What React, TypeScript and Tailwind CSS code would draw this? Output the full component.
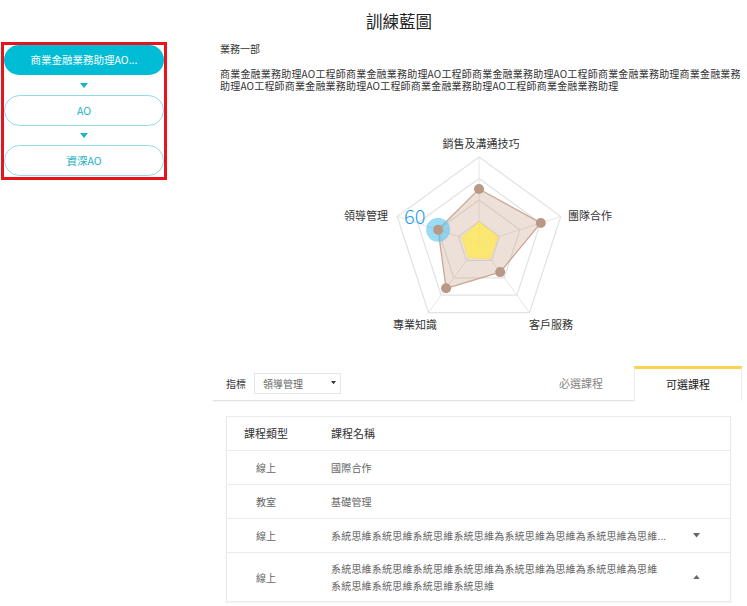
import React, { useState } from "react";

const LABELS = ["銷售及溝通技巧", "團隊合作", "客戶服務", "專業知識", "領導管理"];
const CX = 266;
const CY = 114;
const R = 86;

const point = (i: number, r: number) => {
  const a = (Math.PI * 2 * i) / 5;
  return [CX + r * Math.sin(a), CY - r * Math.cos(a)];
};

const poly = (rs: number[]) =>
  rs.map((r, i) => point(i, r).map((n) => n.toFixed(1)).join(",")).join(" ");

// radar chart for the selected job
const Radar = () => {
  const score = [54, 65, 36, 56, 43];
  const base = [21, 20, 19, 18, 18];
  const [hx, hy] = point(4, 43);

  return (
    <svg width="529" height="225" className="block">
      {[0.25, 0.5, 0.75, 1].map((k) => (
        <polygon
          key={k}
          points={poly([R * k, R * k, R * k, R * k, R * k])}
          fill="none"
          stroke="#e2e2e2"
          strokeWidth="1.2"
        />
      ))}
      {[0, 1, 2, 3, 4].map((i) => {
        const [x, y] = point(i, R);
        return <line key={i} x1={CX} y1={CY} x2={x} y2={y} stroke="#e6e6e6" strokeWidth="1" />;
      })}
      <polygon points={poly(score)} fill="rgba(200,160,136,0.32)" stroke="#c8a894" strokeWidth="1.3" />
      <polygon points={poly(base)} fill="rgba(255,235,80,0.75)" stroke="#f6e26a" strokeWidth="1" />
      <circle cx={hx} cy={hy} r="12" fill="#57c4f2" opacity="0.6" />
      {score.map((r, i) => {
        const [x, y] = point(i, r);
        return <circle key={i} cx={x} cy={y} r="5" fill="#b99986" />;
      })}
      <text x="191" y="95" fontSize="20" fill="#1e9fe6" fontWeight="300">
        60
      </text>
      <g fontSize="11" fill="#333">
        <text x="268" y="19" textAnchor="middle">{LABELS[0]}</text>
        <text x="355" y="91">{LABELS[1]}</text>
        <text x="338" y="200" textAnchor="middle">{LABELS[2]}</text>
        <text x="202" y="200" textAnchor="middle">{LABELS[3]}</text>
        <text x="175" y="91" textAnchor="end">{LABELS[4]}</text>
      </g>
    </svg>
  );
};

const Caret = ({ up, color = "#555", size = 8 }: { up?: boolean; color?: string; size?: number }) => (
  <svg width={size} height={size * 0.625} viewBox="0 0 8 5">
    <path d={up ? "M0 5 L4 0 L8 5 Z" : "M0 0 L8 0 L4 5 Z"} fill={color} />
  </svg>
);

const LONG =
  "系統思維系統思維系統思維系統思維為系統思維為思維為系統思維為思維系統思維系統思維系統思維系統思維";

const courses = [
  { type: "線上", name: "國際合作" },
  { type: "教室", name: "基礎管理" },
  { type: "線上", name: LONG, collapsible: true, open: false },
  { type: "線上", name: LONG, collapsible: true, open: true },
];

export default function App() {
  const [tab, setTab] = useState("optional");
  const [open, setOpen] = useState(courses.map((c) => !!c.open));

  return (
    <div className="flex min-h-[606px] bg-white font-['Noto_Sans_CJK_TC',sans-serif] text-[#333]">
      {/* job path */}
      <aside className="ml-[1px] mt-[42px] flex h-[138px] w-[166px] shrink-0 flex-col items-center border-[3px] border-[#e8141c]">
        <button className="h-[30px] w-full rounded-full bg-[#00bcd4] text-[10.5px] text-white">
          商業金融業務助理AO...
        </button>
        <div className="flex h-[20px] items-center">
          <Caret color="#1ab3cc" />
        </div>
        <button className="h-[31px] w-full rounded-full border border-[#8fdce7] text-[10.5px] text-[#22afc8]">
          AO
        </button>
        <div className="flex h-[19px] items-center">
          <Caret color="#1ab3cc" />
        </div>
        <button className="h-[31px] w-full rounded-full border border-[#8fdce7] text-[10.5px] text-[#22afc8]">
          資深AO
        </button>
      </aside>

      <main className="ml-[46px] mr-[5px] min-w-0 flex-1">
        <h1 className="pl-[153px] pt-[10px] text-[16.5px] leading-[22px] text-[#222]">訓練藍圖</h1>
        <p className="mt-[11px] pl-[7px] text-[10px] leading-[12px]">業務一部</p>
        <p className="mt-[13px] w-[528px] pl-[7px] text-[10px] leading-[12px] tracking-[0.2px]">
          商業金融業務助理AO工程師商業金融業務助理AO工程師商業金融業務助理AO工程師商業金融業務助理商業金融業務助理AO工程師商業金融業務助理AO工程師商業金融業務助理AO工程師商業金融業務助理
        </p>

        <div className="mt-[37px]">
          <Radar />
        </div>

        {/* tabs */}
        <div className="mt-[12px] flex h-[35px]">
          <div className="flex flex-1 items-center border-b border-[#e4e4e4] shadow-[0_1px_1px_rgba(0,0,0,0.04)]">
            <span className="ml-[13px] text-[10px]">指標</span>
            <div className="ml-[8px] flex h-[21px] w-[87px] items-center justify-between border border-[#e6e6e6] pl-[8px] pr-[4px] text-[10px] text-[#666]">
              <span>領導管理</span>
              <Caret color="#333" size={5} />
            </div>
            <button
              onClick={() => setTab("required")}
              className="ml-auto w-[106px] text-center text-[11px] text-[#888]"
            >
              必選課程
            </button>
          </div>
          <button
            onClick={() => setTab("optional")}
            className={`w-[108px] border-x border-t-[3px] border-x-[#ececec] border-t-[#fcd34d] pb-[2px] text-[11px] ${
              tab === "optional" ? "text-[#222]" : "text-[#888]"
            }`}
          >
            可選課程
          </button>
        </div>

        {/* course list */}
        <div className="ml-[13px] mt-[15px] w-[505px] border border-[#ebebeb] shadow-[0_1px_2px_rgba(0,0,0,0.05)]">
          <div className="flex h-[34px] items-center border-b border-[#ebebeb] text-[11px] text-[#333]">
            <span className="w-[78px] text-center">課程類型</span>
            <span className="pl-[26px]">課程名稱</span>
          </div>
          {courses.map((c, i) => (
            <div
              key={i}
              className={`flex items-center text-[10px] text-[#666] ${
                i < courses.length - 1 ? "border-b border-[#ebebeb]" : ""
              } ${c.collapsible && open[i] ? "h-[48px]" : "h-[34px]"}`}
            >
              <span className="w-[78px] shrink-0 text-center">{c.type}</span>
              <span
                className={`w-[370px] shrink-0 pl-[26px] pr-[10px] leading-[17px] tracking-[0.2px] ${
                  c.collapsible && !open[i] ? "whitespace-nowrap" : ""
                }`}
              >
                {c.collapsible && !open[i] ? c.name.slice(0, 32) + "..." : c.name}
              </span>
              {c.collapsible && (
                <button
                  onClick={() => setOpen((o) => o.map((v, j) => (j === i ? !v : v)))}
                  className="ml-[11px] flex h-[20px] w-[20px] items-center justify-center"
                >
                  <Caret up={open[i]} color="#666" size={7} />
                </button>
              )}
            </div>
          ))}
        </div>
      </main>
    </div>
  );
}
